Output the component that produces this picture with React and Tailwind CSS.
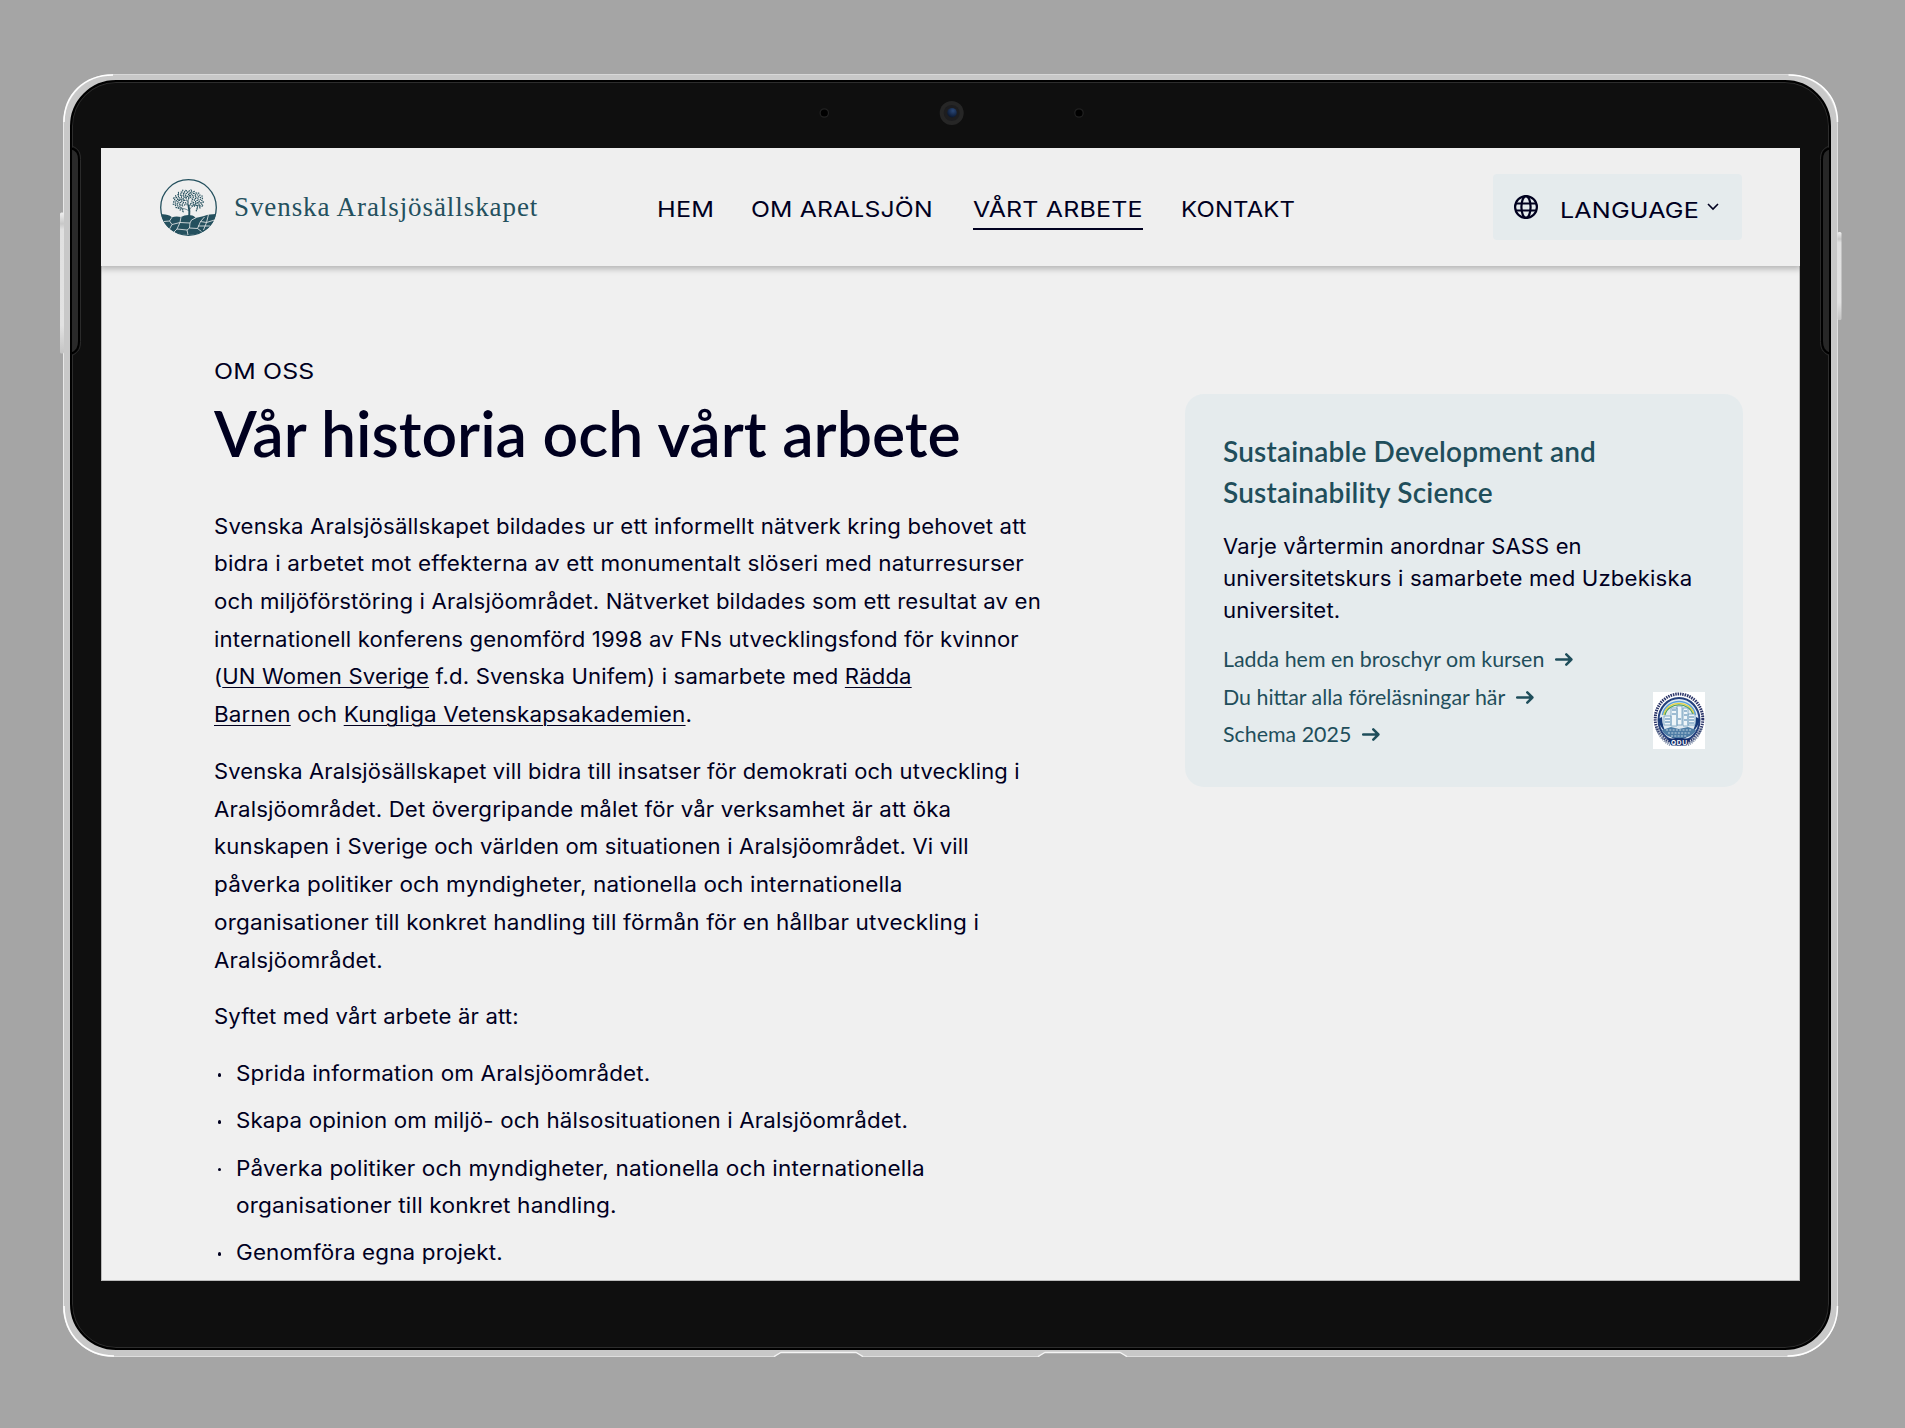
import { useLayoutEffect, useRef } from "react";

/*
 * A single line of text fitted to `w` pixels: by tracking, or, when `wide`
 * is set, by widening the letters themselves.
 */
function Line({ w, wide = true, className = "", children }) {
  const ref = useRef(null);
  useLayoutEffect(() => {
    const el = ref.current;
    el.style.letterSpacing = wide ? "0.15px" : "0px";
    el.style.transform = "none";
    const natural = el.offsetWidth;
    if (wide) {
      el.style.transform = `scaleX(${(w - 0.8) / natural})`;
    } else {
      el.style.letterSpacing = `${(w - natural) / el.textContent.length}px`;
    }
  }, [w, wide]);
  return (
    <span className={`block ${className}`}>
      <span ref={ref} className="inline-block origin-left whitespace-nowrap">
        {children}
      </span>
    </span>
  );
}

function Link({ children }) {
  return (
    <a className="underline decoration-1 underline-offset-[3px]">{children}</a>
  );
}

/* Leaves spread over the crown on a golden-angle spiral. */
const leaves = Array.from({ length: 120 }, (_, i) => {
  const r = Math.sqrt((i + 6) / 126);
  const a = i * 2.39996;
  const x = 28.4 + Math.cos(a) * r * 15.6;
  const y = 22 + Math.sin(a) * r * 11.4;
  return { x, y, a: (i * 47) % 180 };
}).filter(({ x, y }) => !(y > 27 && x > 23 && x < 35) && !(y > 32.5));

function Logo() {
  return (
    <svg viewBox="0 0 57 57" className="size-[57px] shrink-0" fill="none">
      <circle cx="28.5" cy="28.5" r="27.8" stroke="#24505e" strokeWidth="1.3" />
      <path
        d="M1.2 35.3C5 35 9 35.6 12 38.2c3-.9 6-.9 9-.1 2.500-1.300 4.500-2 7.500-2s5 .6 7 2.600c3-.6 6-1 8.500-1.800 4-1.300 8-1.500 11.800-1.800C54.500 47 43.500 56 28.500 56S3 47 1.200 35.300Z"
        fill="#24505e"
      />
      <g stroke="#efefef" strokeWidth="0.8">
        <path d="M12 38.200 9.500 42 4 42.500M9.500 42l2.500 3.500 8-2M21 38l-1 5.500L17 50M12 45.500 9.500 50M20 43.500l10 .5 1.500-3 5-2.500M30 44l-.5 5 8 .5 3-7 4-4.500M29.500 49l-2.500 2 1 5M27 51l-10-1-3 3M37.500 49.500l4 3M40.500 42.500l6 1 2-8M46.500 43.500 43.500 51M46.500 43.500l8-2.500M38 47h12" />
      </g>
      <g stroke="#24505e" strokeLinecap="round">
        <path d="M29.200 37.500c.4-4 .3-7-.7-11" strokeWidth="1.900" />
        <path
          d="M28.800 29c-.5-5-1.300-8-3.800-12M28.200 24c0-4 1-7 2.500-11M29.200 32c-3.500-2.500-7-3-11.500-3M29.300 31c2.500-4 5.500-6.500 9.500-8M27.500 22c-3-1-6-1.500-9-1.500M33 26c3 .5 5 .3 7.500 1"
          strokeWidth="0.6"
        />
      </g>
      <g fill="#24505e">
        {leaves.map(({ x, y, a }) => (
          <ellipse
            key={`${x}-${y}`}
            cx={x}
            cy={y}
            rx="1.05"
            ry="0.6"
            transform={`rotate(${a} ${x} ${y})`}
          />
        ))}
      </g>
    </svg>
  );
}

function Globe() {
  return (
    <svg
      viewBox="0 0 24 24"
      className="size-6"
      fill="none"
      stroke="#00001f"
      strokeWidth="2.2"
    >
      <circle cx="12" cy="12" r="10.900" />
      <ellipse cx="12" cy="12" rx="4.600" ry="10.900" />
      <path d="M1.800 8.500h20.400M1.800 15.500h20.400" />
    </svg>
  );
}

function Arrow() {
  return (
    <svg
      viewBox="0 0 18 14"
      className="ml-[11px] h-[14px] w-[18px]"
      fill="none"
      stroke="#1f4e5b"
      strokeWidth="2.500"
      strokeLinecap="round"
      strokeLinejoin="round"
    >
      <path d="M1.200 6.500h15.200M11.300 1.400 16.400 6.500l-5.100 5.100" />
    </svg>
  );
}

function Emblem() {
  return (
    <svg viewBox="0 0 52 57" className="h-[57px] w-[52px] bg-white" fill="none">
      <ellipse cx="26" cy="27" rx="23.800" ry="25" stroke="#2a3468" strokeWidth="3" strokeDasharray="1.500 0.900" />
      <ellipse cx="26" cy="28" rx="20.500" ry="22" fill="#dfe9f0" stroke="#24407c" strokeWidth="2" />
      <path d="M5 27a21.500 23 0 0 0 42 0l-4-2c0 30-34 30-34 0Z" fill="#173a78" />
      <path d="M9.500 23C13 5 39 5 42.500 23" stroke="#5aa0dc" strokeWidth="1.500" />
      <path d="M10.800 23C14 7.500 38 7.500 41.200 23" stroke="#e8d23c" strokeWidth="1.300" />
      <path d="M12 23C15 9.500 37 9.500 40 23" stroke="#4fa35a" strokeWidth="1.200" />
      <path d="M9 38c4 11 30 11 34 0l-8-3-9 2-8-2Z" fill="#4d7ca5" />
      <path d="M18 16h6v18h-6zM24 14h5v19h-5zM30 16h5v18h-5zM11 24h7v9h-7zM35 22h7v11h-7z" fill="#eef5f9" stroke="#6f9dbc" strokeWidth="0.8" />
      <path d="M19 18h4M19 22h4M25 27h3M31 19h3M31 23h3M31 28h3M12 27h5M12 30h5M36 25h5M36 28h5M36 31h5" stroke="#4b82ad" strokeWidth="1.200" />
      <path d="M13 38h26M15 41h22M18 44h16" stroke="#cfe0ea" strokeWidth="0.900" strokeDasharray="2 1.300" />
      <path d="M3.500 36C7 45 12 50 18 53M48.500 36C45 45 40 50 34 53" stroke="#8594ad" strokeWidth="3" strokeDasharray="1.200 0.900" />
      <path d="M14.500 46.500h23l-4 7h-15Z" fill="#112c6b" />
      <text x="26" y="52.600" textAnchor="middle" fill="#fff" fontFamily="Inter, sans-serif" fontSize="6.600" fontWeight="700" textLength="16">
        QDU
      </text>
    </svg>
  );
}

function Header() {
  return (
    <header className="relative flex h-[118px] shrink-0 items-center bg-[#efefef] shadow-[0_2px_6px_1px_rgba(0,0,0,0.25)]">
      <div className="ml-[59px] flex w-[496.500px] items-center">
        <Logo />
        <Line
          w={304}
          wide={false}
          className="ml-[17px] font-['Liberation_Serif',serif] text-[27px] leading-8 text-[#24505e]"
        >
          Svenska Aralsjösällskapet
        </Line>
      </div>
      <nav className="mt-[9px] flex w-[836.500px] text-[22px] leading-8">
        <Line w={58} className="w-[94.500px]">HEM</Line>
        <Line w={183} className="w-[222px]">OM ARALSJÖN</Line>
        <span className="mr-[38px] h-[37px] w-[170px] border-b-2 border-[#00001f]">
          <Line w={170}>VÅRT ARBETE</Line>
        </span>
        <Line w={115}>KONTAKT</Line>
      </nav>
      <div className="flex h-[66px] w-[249px] items-center rounded bg-[#e5ebed] pl-[21px]">
        <Globe />
        <Line w={140} className="mt-[5px] ml-[21.500px] w-[140px] text-[22px] leading-8">LANGUAGE</Line>
        <svg viewBox="0 0 12 8" className="ml-[7.500px] h-2 w-3" fill="none" stroke="#00001f" strokeWidth="1.600">
          <path d="m1 1 5 5 5-5" />
        </svg>
      </div>
    </header>
  );
}

function Bullet({ children }) {
  return (
    <li className="flex">
      <span className="mt-[18px] mr-[14.500px] ml-[3.500px] size-[3.500px] rounded-full bg-[#00001f]" />
      <span>{children}</span>
    </li>
  );
}

function Article() {
  return (
    <article className="ml-[113px] w-[971px] pt-[89px]">
      <Line w={101} className="text-[21.600px] leading-8">OM OSS</Line>
      <h1 className="mt-2 font-['Lato',sans-serif] text-[62.500px] leading-[75px] font-semibold">
        <Line w={747} wide={false}>Vår historia och vårt arbete</Line>
      </h1>
      <div className="mt-[37.500px] flex flex-col gap-[19px] text-[20.800px] leading-[37.740px]">
        <p>
          <Line w={813}>Svenska Aralsjösällskapet bildades ur ett informellt nätverk kring behovet att</Line>
          <Line w={811}>bidra i arbetet mot effekterna av ett monumentalt slöseri med naturresurser</Line>
          <Line w={828}>och miljöförstöring i Aralsjöområdet. Nätverket bildades som ett resultat av en</Line>
          <Line w={806}>internationell konferens genomförd 1998 av FNs utvecklingsfond för kvinnor</Line>
          <Line w={698}>
            (<Link>UN Women Sverige</Link> f.d. Svenska Unifem) i samarbete med <Link>Rädda</Link>
          </Line>
          <Line w={479}>
            <Link>Barnen</Link> och <Link>Kungliga Vetenskapsakademien</Link>.
          </Line>
        </p>
        <p>
          <Line w={807}>Svenska Aralsjösällskapet vill bidra till insatser för demokrati och utveckling i</Line>
          <Line w={738}>Aralsjöområdet. Det övergripande målet för vår verksamhet är att öka</Line>
          <Line w={756}>kunskapen i Sverige och världen om situationen i Aralsjöområdet. Vi vill</Line>
          <Line w={689}>påverka politiker och myndigheter, nationella och internationella</Line>
          <Line w={766}>organisationer till konkret handling till förmån för en hållbar utveckling i</Line>
          <Line w={169}>Aralsjöområdet.</Line>
        </p>
        <p>
          <Line w={306}>Syftet med vårt arbete är att:</Line>
        </p>
        <ul className="flex flex-col gap-[9.500px]">
          <Bullet>
            <Line w={415}>Sprida information om Aralsjöområdet.</Line>
          </Bullet>
          <Bullet>
            <Line w={673}>Skapa opinion om miljö- och hälsosituationen i Aralsjöområdet.</Line>
          </Bullet>
          <Bullet>
            <Line w={690}>Påverka politiker och myndigheter, nationella och internationella</Line>
            <Line w={382}>organisationer till konkret handling.</Line>
          </Bullet>
          <Bullet>
            <Line w={268}>Genomföra egna projekt.</Line>
          </Bullet>
        </ul>
      </div>
    </article>
  );
}

function CourseCard() {
  return (
    <aside className="mt-[128px] h-[393px] w-[558px] rounded-[19px] bg-[#e5ebed] pt-[37.400px] pr-[38px] pl-[38px]">
      <h2 className="font-['Lato',sans-serif] text-[28px] leading-[40.300px] font-semibold text-[#1f4e5b]">
        <Line w={373} wide={false}>Sustainable Development and</Line>
        <Line w={270} wide={false}>Sustainability Science</Line>
      </h2>
      <p className="mt-[19.300px] text-[20.800px] leading-[31.900px]">
        <Line w={360}>Varje vårtermin anordnar SASS en</Line>
        <Line w={470}>universitetskurs i samarbete med Uzbekiska</Line>
        <Line w={118}>universitet.</Line>
      </p>
      <div className="mt-[14.300px] flex items-end justify-between">
        <ul className="font-['Lato',sans-serif] text-[21.400px] leading-[37.600px] font-normal text-[#1f4e5b]">
          <li className="flex items-center">Ladda hem en broschyr om kursen<Arrow /></li>
          <li className="flex items-center">Du hittar alla föreläsningar här<Arrow /></li>
          <li className="flex items-center">Schema 2025<Arrow /></li>
        </ul>
        <div className="mb-[5px]">
          <Emblem />
        </div>
      </div>
    </aside>
  );
}

/* Buttons, feet and side grilles drawn over the tablet's metal rim. */
function Hardware() {
  return (
    <svg viewBox="0 0 1905 1428" className="pointer-events-none absolute inset-0 size-full" fill="none">
      <defs>
        <linearGradient id="btn" x1="0" y1="0" x2="0" y2="1">
          <stop offset="0" stopColor="#f0f0f0" />
          <stop offset="0.080" stopColor="#c8c8c8" />
          <stop offset="0.120" stopColor="#e0e0e0" />
          <stop offset="0.800" stopColor="#e2e2e2" />
          <stop offset="1" stopColor="#c4c4c4" />
        </linearGradient>
        <radialGradient id="lens" cx="0.600" cy="0.300" r="0.700">
          <stop offset="0" stopColor="#2a4878" />
          <stop offset="1" stopColor="#0a1730" />
        </radialGradient>
      </defs>
      <rect x="60" y="212.500" width="4" height="141" rx="1.500" fill="url(#btn)" />
      <rect x="1837.500" y="232" width="4" height="88" rx="1.500" fill="url(#btn)" />
      <path d="M71 148c6 2 8 5 8 12v181c0 7-2 10-8 13Z" fill="#2a2a2a" stroke="#000" strokeWidth="2" />
      <path d="M73 146.500c5.500 2.500 7.500 6 7.500 13v182c0 7-2 10.500-7.500 13.500" stroke="#2b2b2b" />
      <path d="M1830 148c-6 2-8 5-8 12v181c0 7 2 10 8 13Z" fill="#272727" stroke="#000" strokeWidth="2" />
      <path d="M1828 146.500c-5.500 2.500-7.500 6-7.500 13v182c0 7 2 10.500 7.500 13.500" stroke="#2b2b2b" />
      <g fill="#a4a4a4">
        <path d="M774 1357.500l7-5h75l7 5Z" />
        <path d="M1038 1357.500l7-5h75l7 5Z" />
      </g>
      <g stroke="#f4f4f4" strokeWidth="1.300">
        <path d="M774 1356.500l7-4h75l7 4M1038 1356.500l7-4h75l7 4" />
      </g>
      <g stroke="#fff" strokeWidth="1.500">
        <path d="M64 122c0-27 20-47 49-47M1837.500 122c0-27-20-47-49-47M64 1306c0 29 22 50 50 50M1837.500 1306c0 29-22 50-50 50" />
      </g>
      <circle cx="951.700" cy="113" r="12" fill="#262626" />
      <circle cx="951.700" cy="113" r="8" fill="#1d1d1f" />
      <circle cx="952" cy="112.700" r="4.800" fill="url(#lens)" />
      <circle cx="824.300" cy="113" r="4.200" fill="#000" stroke="#222" strokeWidth="1.200" />
      <circle cx="1079" cy="113" r="4.200" fill="#000" stroke="#222" strokeWidth="1.200" />
    </svg>
  );
}

export default function App() {
  return (
    <div className="relative h-[1428px] w-[1905px] overflow-hidden bg-[#a5a5a5] pt-[74px] pl-[63px] font-['Inter',sans-serif] font-normal text-[#00001f]">
      <div className="h-[1283px] w-[1775px] rounded-[50px] border border-t-[#d8d8d8] border-r-[#e0e0e0] border-b-[#dedede] border-l-[#e8e8e8] bg-[#c8c8c8] px-[6px] py-[5px]">
        <div className="h-[1270px] w-[1761px] rounded-[46px] border-2 border-black bg-[#0f0f0f] pt-[66px] pl-[29px] shadow-[inset_0_0_0_1px_#2d2d2d]">
          <div className="flex h-[1133px] w-[1699px] flex-col overflow-hidden bg-[#f0f0f0] shadow-[inset_0_0_0_1px_#bbb]">
            <Header />
            <main className="flex">
              <Article />
              <CourseCard />
            </main>
          </div>
        </div>
      </div>
      <Hardware />
    </div>
  );
}
